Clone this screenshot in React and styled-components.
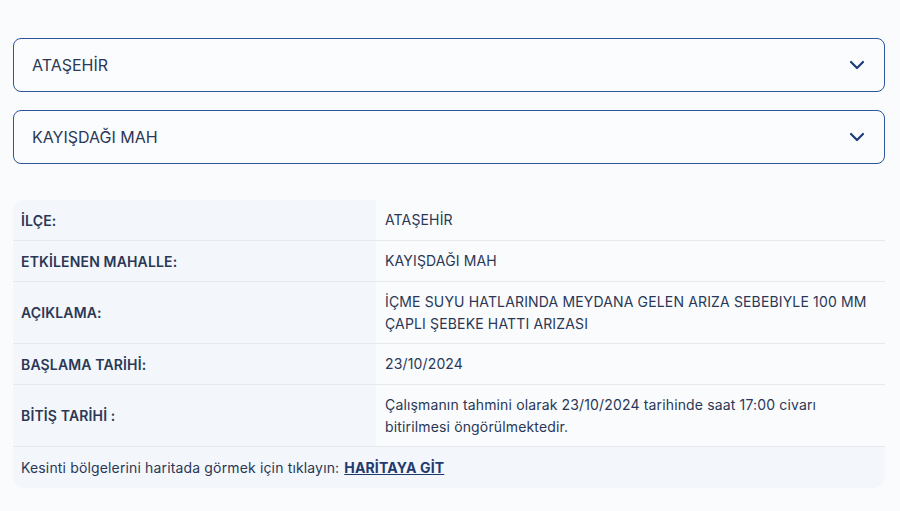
import React from "react";
import styled, { createGlobalStyle } from "styled-components";

const Global = createGlobalStyle`
  html, body { margin: 0; padding: 0; background: #f9fbfd; }
  body { font-family: Inter, "Noto Sans", sans-serif; color: #2a3856; }
`;

const Page = styled.div`
  padding: 38px 15px 0 13px;
  display: flex;
  flex-direction: column;
`;

const Select = styled.div`
  height: 54px;
  box-sizing: border-box;
  border: 1px solid #2c559a;
  border-radius: 8px;
  display: flex;
  align-items: center;
  justify-content: space-between;
  padding: 0 19px 0 18px;
  font-size: 16px;
  color: #2a3856;
  margin-bottom: ${(p) => p.$mb || 0}px;
  background: #fafcfe;
`;

const Chevron = () => (
  <svg width="16" height="10" viewBox="0 0 16 10">
    <path d="M2 2 L8 8 L14 2" fill="none" stroke="#1d3c78" strokeWidth="2.2" strokeLinecap="round" strokeLinejoin="round" />
  </svg>
);

const Table = styled.div`
  margin-top: 36px;
  border-radius: 11px;
  overflow: hidden;
  display: grid;
  grid-template-columns: 363px 1fr;
  font-size: 14px;
  letter-spacing: 0.15px;
`;

const Label = styled.div`
  background: #f3f6fb;
  font-weight: 600;
  padding: 0 8px;
  min-height: ${(p) => p.$h}px;
  display: flex;
  align-items: center;
  border-top: ${(p) => (p.$first ? "none" : "1px solid #e6e9ee")};
  box-sizing: border-box;
`;

const Value = styled.div`
  background: #f9fbfd;
  padding: 0 9px;
  min-height: ${(p) => p.$h}px;
  display: flex;
  align-items: center;
  line-height: 22px;
  border-top: ${(p) => (p.$first ? "none" : "1px solid #e6e9ee")};
  box-sizing: border-box;
`;

const Footer = styled.div`
  grid-column: 1 / -1;
  background: #f3f6fb;
  border-top: 1px solid #e6e9ee;
  height: 41px;
  display: flex;
  align-items: center;
  padding: 0 8px;
  border-bottom-right-radius: 11px;
`;

const Link = styled.a`
  color: #1f3a6e;
  font-weight: 700;
  text-decoration: underline;
  margin-left: 5px;
`;

const rows = [
  ["İLÇE:", "ATAŞEHİR", 40],
  ["ETKİLENEN MAHALLE:", "KAYIŞDAĞI MAH", 41],
  ["AÇIKLAMA:", "İÇME SUYU HATLARINDA MEYDANA GELEN ARIZA SEBEBIYLE 100 MM ÇAPLI ŞEBEKE HATTI ARIZASI", 62],
  ["BAŞLAMA TARİHİ:", "23/10/2024", 41],
  ["BİTİŞ TARİHİ :", "Çalışmanın tahmini olarak 23/10/2024 tarihinde saat 17:00 civarı bitirilmesi öngörülmektedir.", 62],
];

export default function App() {
  return (
    <>
      <Global />
      <Page>
        <Select $mb={18}>
          <span>ATAŞEHİR</span>
          <Chevron />
        </Select>
        <Select>
          <span>KAYIŞDAĞI MAH</span>
          <Chevron />
        </Select>
        <Table>
          {rows.map(([l, v, h], i) => (
            <React.Fragment key={l}>
              <Label $h={h} $first={i === 0}>{l}</Label>
              <Value $h={h} $first={i === 0}>{v}</Value>
            </React.Fragment>
          ))}
          <Footer>
            Kesinti bölgelerini haritada görmek için tıklayın:
            <Link href="#">HARİTAYA GİT</Link>
          </Footer>
        </Table>
      </Page>
    </>
  );
}
